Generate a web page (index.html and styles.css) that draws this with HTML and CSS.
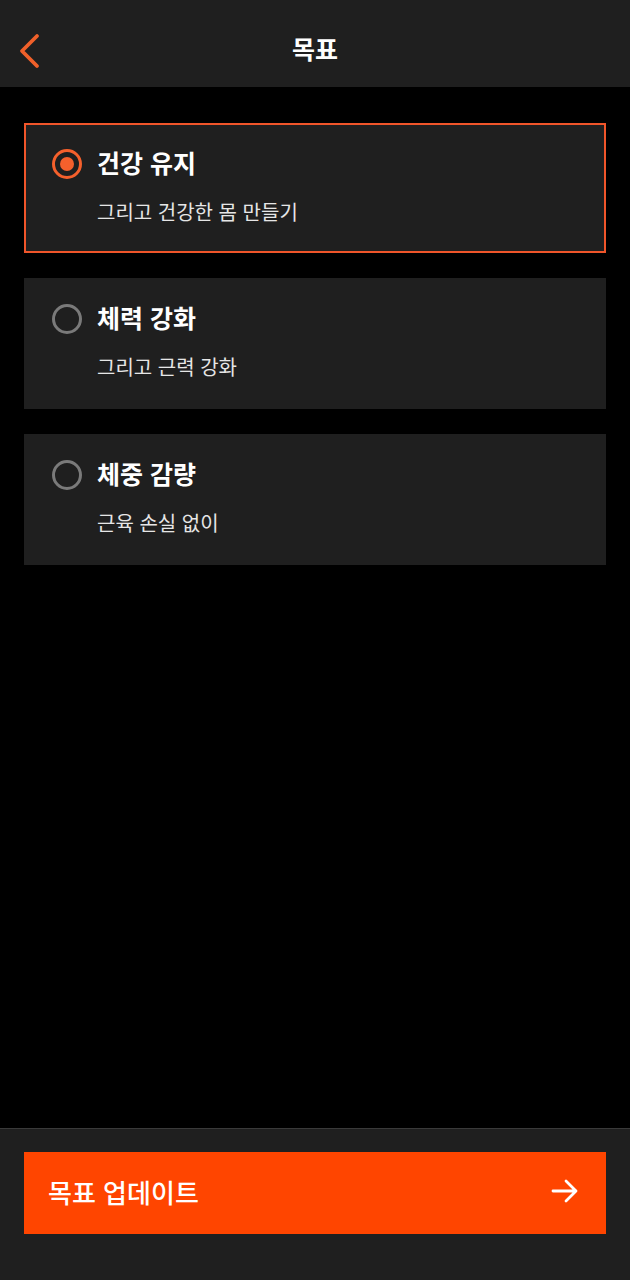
FILE: index.html
```html
<!DOCTYPE html>
<html lang="ko">
<head>
<meta charset="utf-8">
<title>목표</title>
<link rel="stylesheet" href="styles.css">
</head>
<body>
<div class="app">
  <header class="topbar">
    <button class="back" aria-label="뒤로">
      <svg width="22" height="36" viewBox="0 0 22 36"><path d="M19 3 L4 18 L19 33" fill="none" stroke="#f0602a" stroke-width="3.8" stroke-linecap="round" stroke-linejoin="round"/></svg>
    </button>
    <h1 class="title">목표</h1>
  </header>
  <main class="list">
    <div class="option selected">
      <div class="row">
        <span class="radio on"><span class="dot"></span></span>
        <span class="opt-title">건강 유지</span>
      </div>
      <div class="opt-sub">그리고 건강한 몸 만들기</div>
    </div>
    <div class="option">
      <div class="row">
        <span class="radio"></span>
        <span class="opt-title">체력 강화</span>
      </div>
      <div class="opt-sub">그리고 근력 강화</div>
    </div>
    <div class="option">
      <div class="row">
        <span class="radio"></span>
        <span class="opt-title">체중 감량</span>
      </div>
      <div class="opt-sub">근육 손실 없이</div>
    </div>
  </main>
  <footer class="bottom">
    <button class="cta">
      <span>목표 업데이트</span>
      <svg width="28" height="24" viewBox="0 0 28 24"><path d="M2 12 H25 M15 2 L25 12 L15 22" fill="none" stroke="#fff" stroke-width="2.8" stroke-linecap="round" stroke-linejoin="round"/></svg>
    </button>
  </footer>
</div>
</body>
</html>
```
FILE: styles.css
```css
* { box-sizing: border-box; }
html, body { margin: 0; padding: 0; background: #000; }
body {
  font-family: "Noto Sans CJK KR", "Noto Sans", sans-serif;
  color: #fff;
}
.app {
  width: 630px;
  height: 1280px;
  display: flex;
  flex-direction: column;
}
.topbar {
  height: 87px;
  background: #1f1f1f;
  display: flex;
  align-items: center;
  justify-content: center;
  position: relative;
}
.back {
  position: absolute;
  left: 18px;
  top: 33px;
  background: none;
  border: 0;
  padding: 0;
  display: flex;
}
.title {
  margin: 0;
  font-size: 25px;
  font-weight: 700;
  line-height: 1;
  padding-top: 10px;
}
.list {
  flex: 1;
  padding: 36px 24px 0;
  display: flex;
  flex-direction: column;
  gap: 25px;
}
.option {
  height: 131px;
  background: #1f1f1f;
  border: 2px solid transparent;
  padding: 19px 26px 0;
}
.option.selected {
  border-color: #f0552a;
  height: 130px;
}
.row {
  display: flex;
  align-items: center;
  gap: 15px;
  height: 36px;
}
.radio {
  width: 30px;
  height: 30px;
  border-radius: 50%;
  border: 3px solid #7a7a7a;
  display: flex;
  align-items: center;
  justify-content: center;
  flex: none;
  margin-top: 4px;
}
.radio.on { border-color: #f5602c; }
.dot {
  width: 14px;
  height: 14px;
  border-radius: 50%;
  background: #f5602c;
}
.opt-title {
  font-size: 25px;
  font-weight: 700;
  line-height: 1;
}
.opt-sub {
  margin-top: 20px;
  padding-left: 45px;
  font-size: 20px;
  color: #e6e6e6;
  line-height: 1.2;
}
.bottom {
  height: 152px;
  background: #1f1f1f;
  border-top: 1px solid #3a3a3a;
  padding: 23px 24px 0;
}
.cta {
  width: 100%;
  height: 82px;
  background: #ff4500;
  border: 0;
  display: flex;
  align-items: center;
  justify-content: space-between;
  padding: 0 27px 4px 24px;
  color: #fff;
  font-family: "Noto Sans CJK KR", "Noto Sans", sans-serif;
  font-size: 26px;
  font-weight: 500;
}
```
